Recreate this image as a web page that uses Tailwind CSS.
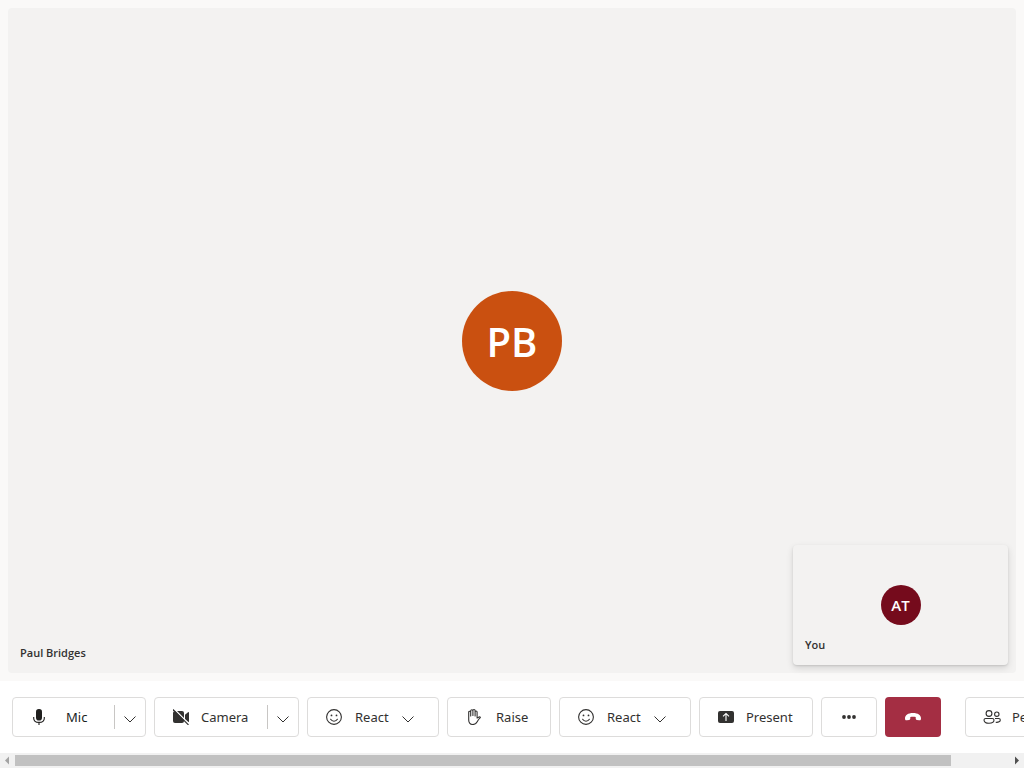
<!DOCTYPE html>
<html lang="en">
<head>
<meta charset="utf-8">
<meta name="viewport" content="width=device-width, initial-scale=1">
<title>Call</title>
<script src="https://cdn.jsdelivr.net/npm/@tailwindcss/browser@4"></script>
</head>
<body class="flex h-screen flex-col overflow-hidden bg-white font-['Segoe_UI','Noto_Sans',sans-serif] text-[#323130]">
<svg class="hidden" aria-hidden="true">
  <symbol id="chevron" viewBox="0 0 14 14"><path d="M1.500 4.500 7 10l5.500-5.500" fill="none" stroke="currentColor" stroke-width="1"/></symbol>
  <symbol id="smile" viewBox="0 0 16 16"><circle cx="8" cy="8" r="7.400" fill="none" stroke="currentColor" stroke-width="1.100"/><circle cx="5.500" cy="6.400" r=".9" fill="currentColor"/><circle cx="10.500" cy="6.400" r=".9" fill="currentColor"/><path d="M4.600 10.300c1.700 2.500 5.100 2.500 6.800 0" fill="none" stroke="currentColor" stroke-width="1.100" stroke-linecap="round"/></symbol>
</svg>

<main class="min-h-0 flex-1 bg-[#faf9f8] p-2">
  <section class="relative flex h-full items-center justify-center rounded bg-[#f3f2f1]">
    <div class="flex size-[100px] items-center justify-center rounded-full bg-[#ca5010] pt-0.5 font-['Segoe_UI','Open_Sans',sans-serif] text-[40px] leading-none font-semibold text-white">PB</div>
    <span class="absolute bottom-3 left-3 font-['Segoe_UI','Open_Sans',sans-serif] text-[11px] leading-4 font-semibold">Paul Bridges</span>
    <section class="absolute right-2 bottom-2 flex h-[120px] w-[215px] items-center justify-center rounded bg-[#f3f2f1] shadow-[0_3px_7px_rgba(0,0,0,0.13),0_1px_2px_rgba(0,0,0,0.11)]">
      <div class="flex size-10 items-center justify-center rounded-full bg-[#750b1c] font-['Segoe_UI','Open_Sans',sans-serif] text-[15px] leading-none font-semibold text-white">AT</div>
      <span class="absolute bottom-3 left-3 font-['Segoe_UI','Open_Sans',sans-serif] text-[11px] leading-4 font-semibold">You</span>
    </section>
  </section>
</main>

<nav class="flex shrink-0 gap-2 overflow-hidden bg-white px-3 py-4 text-[13px] leading-5" aria-label="Call controls">
  <div class="flex h-10 w-[134px] shrink-0 items-center rounded border border-[#dddcdb]">
    <button class="flex h-full flex-1 items-center gap-[19px] pl-[18px] text-[#201f1e]">
      <svg class="size-4" viewBox="0 0 16 16"><rect x="5" y="0" width="6" height="11.500" rx="2.800" fill="currentColor"/><path d="M2.700 8v1.200c0 2.400 2 4.200 5.300 4.200s5.300-1.800 5.300-4.200V8M8 13.400V16" fill="none" stroke="currentColor" stroke-width="1.100"/></svg>
      Mic
    </button>
    <button class="flex h-6 w-[31px] items-center justify-center border-l border-[#c8c6c4] pt-1" aria-label="Microphone options"><svg class="size-3.5"><use href="#chevron"/></svg></button>
  </div>
  <div class="flex h-10 w-[145px] shrink-0 items-center rounded border border-[#dddcdb]">
    <button class="flex h-full flex-1 items-center gap-3 pl-[18px]">
      <svg class="size-4" viewBox="0 0 16 16"><rect y="2" width="11" height="12" rx="2" fill="currentColor"/><path d="M12 5.700 15 3.300q1-.6 1 .4v8.600q0 1-1 .4l-3-2.400Z" fill="currentColor"/><path d="M1 0 17 16" stroke="white" stroke-width="1.500"/><path d="M0 .5 15.500 16" stroke="currentColor" stroke-width="1.100"/></svg>
      Camera
    </button>
    <button class="flex h-6 w-[31px] items-center justify-center border-l border-[#c8c6c4] pt-1" aria-label="Camera options"><svg class="size-3.5"><use href="#chevron"/></svg></button>
  </div>
  <button class="flex h-10 w-[132px] shrink-0 items-center rounded border border-[#dddcdb] pr-[23px] pl-[18px]">
    <svg class="mr-[13px] size-4"><use href="#smile"/></svg>React<svg class="mt-1 ml-auto size-3.5"><use href="#chevron"/></svg>
  </button>
  <button class="flex h-10 w-[104px] shrink-0 items-center gap-[14px] rounded border border-[#dddcdb] pl-[18px]">
    <svg class="size-4" viewBox="0 0 16 16" fill="none" stroke="currentColor" stroke-width="1.100" stroke-linecap="round" stroke-linejoin="round"><path d="M2.700 7V3.300c0-1.500 2-1.500 2 0V7V1.900c0-1.500 2.200-1.500 2.200 0V6.500V1.600c0-1.400 2.200-1.400 2.200 0V7V3c0-1.400 2-1.400 2 0v6l2-1.100c.7-.4 1.400 0 1.200.8-1.300 1.200-2.300 2.500-3.100 4.100-.8 1.600-1.900 2.700-4.200 2.700-2.700 0-4.300-1.700-4.300-4.600V7"/></svg>
    Raise
  </button>
  <button class="flex h-10 w-[132px] shrink-0 items-center rounded border border-[#dddcdb] pr-[23px] pl-[18px]">
    <svg class="mr-[13px] size-4"><use href="#smile"/></svg>React<svg class="mt-1 ml-auto size-3.5"><use href="#chevron"/></svg>
  </button>
  <button class="flex h-10 w-[114px] shrink-0 items-center gap-3 rounded border border-[#dddcdb] pl-[18px]">
    <svg class="size-4" viewBox="0 0 16 16"><rect y="2" width="16" height="12" rx="2" fill="currentColor"/><path d="M8 12V4.500M5 7.300l3-2.900 3 2.900" fill="none" stroke="white" stroke-width="1.100"/></svg>
    Present
  </button>
  <button class="flex h-10 w-14 shrink-0 items-center justify-center rounded border border-[#dddcdb]" aria-label="More">
    <svg class="size-4" viewBox="0 0 16 16" fill="currentColor"><circle cx="3" cy="8" r="1.900"/><circle cx="8" cy="8" r="1.900"/><circle cx="13" cy="8" r="1.900"/></svg>
  </button>
  <button class="flex h-10 w-14 shrink-0 items-center justify-center rounded bg-[#a42e43] text-white" aria-label="Leave call">
    <svg class="size-4" viewBox="0 0 16 16" fill="currentColor"><path d="M8 4c5 0 8 2.200 8 5.500 0 1.500-.7 2-1.900 1.800l-2.200-.4c-.9-.2-1.200-.7-1.200-1.600V8.100c-1.700-.6-3.700-.6-5.400 0v1.200c0 .9-.3 1.400-1.200 1.600l-2.200.4C.7 11.500 0 11 0 9.500 0 6.200 3 4 8 4Z"/></svg>
  </button>
  <button class="ml-4 flex h-10 w-[122px] shrink-0 items-center gap-[11px] rounded border border-[#dddcdb] pl-[17px]">
    <svg class="h-4 w-[18px]" viewBox="0 0 18 16" fill="none" stroke="currentColor" stroke-width="1.100" stroke-linejoin="round"><circle cx="6" cy="4.500" r="2.900"/><circle cx="13.800" cy="5.200" r="2.200"/><path d="M2.700 9.500h6.600c1.100 0 1.700.6 1.700 1.600 0 2-1.900 3.200-5 3.200s-5-1.200-5-3.200c0-1 .6-1.600 1.700-1.600ZM12 9.500h3.700c1 0 1.600.5 1.600 1.400 0 1.700-1.800 2.700-4.600 2.400"/></svg>
    People
  </button>
</nav>

<div class="flex h-[15px] shrink-0 items-center bg-[#f1f1f1]" aria-hidden="true">
  <svg class="h-[15px] w-[15px] shrink-0" viewBox="0 0 15 15"><path d="M9 3.500v8l-4-4Z" fill="#a3a3a3"/></svg>
  <div class="h-full flex-1 py-0.5"><div class="h-full w-[94.2%] bg-[#c1c1c1]"></div></div>
  <svg class="h-[15px] w-[15px] shrink-0" viewBox="0 0 15 15"><path d="M6 3.500v8l4-4Z" fill="#505050"/></svg>
</div>
</body>
</html>
